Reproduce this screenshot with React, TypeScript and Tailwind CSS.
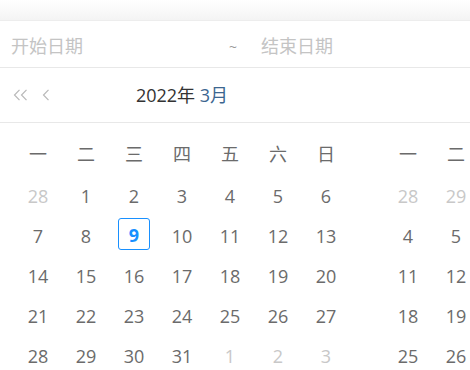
const weekdays = ['一', '二', '三', '四', '五', '六', '日'];

type Day = { n: number; muted?: boolean; selected?: boolean };

const march: Day[] = [
  { n: 28, muted: true },
  ...Array.from({ length: 31 }, (_, i) => ({ n: i + 1, selected: i + 1 === 9 })),
  { n: 1, muted: true },
  { n: 2, muted: true },
  { n: 3, muted: true },
];

const april: Day[] = [
  { n: 28, muted: true },
  { n: 29, muted: true },
  { n: 30, muted: true },
  { n: 31, muted: true },
  ...Array.from({ length: 31 }, (_, i) => ({ n: i + 1 })),
];

function Chevron({ className }: { className?: string }) {
  return (
    <svg width="8" height="12" viewBox="0 0 8 12" className={className} fill="none" stroke="#b8b8b8" strokeWidth="1.2">
      <path d="M6.5 0.8 L1.5 6 L6.5 11.2" />
    </svg>
  );
}

function MonthGrid({ days }: { days: Day[] }) {
  return (
    <div className="w-[370px] shrink-0 pl-[14px] pt-[9px]">
      <div className="grid w-[336px] grid-cols-7">
        {weekdays.map((w) => (
          <div key={w} className="flex h-[44px] items-center justify-center text-[18px] text-[#6b6b6b]">
            {w}
          </div>
        ))}
        {days.slice(0, 35).map((d, i) => (
          <div key={i} className="flex h-[40px] items-center justify-center">
            {d.selected ? (
              <span className="flex h-[32px] w-[32px] -translate-y-[2px] items-center justify-center rounded-[3px] border border-[#1890ff] pt-[3px] text-[18px] font-bold text-[#1890ff]">
                {d.n}
              </span>
            ) : (
              <span className={`text-[18px] leading-[24px] ${d.muted ? 'text-[#c8c8c8]' : 'text-[#6b6b6b]'}`}>{d.n}</span>
            )}
          </div>
        ))}
      </div>
    </div>
  );
}

export default function App() {
  return (
    <div
      className="h-[370px] w-[470px] overflow-hidden bg-white"
      style={{ fontFamily: '"Open Sans", "Noto Sans CJK SC", sans-serif' }}
    >
      {/* shadow of the field above */}
      <div className="h-[21px] border-b border-[#ededed] bg-gradient-to-b from-white to-[#f4f4f4]" />

      {/* range inputs */}
      <div className="flex h-[47px] items-center border-b border-[#e8e8e8] pt-[5px] text-[18px] text-[#c4c4c4]">
        <span className="w-[218px] pl-[11px]">开始日期</span>
        <span className="w-[30px] text-center text-[14px] text-[#999]">~</span>
        <span className="pl-[13px]">结束日期</span>
      </div>

      {/* header */}
      <div className="flex h-[55px] items-center border-b border-[#e8e8e8]">
        <div className="grid w-[364px] grid-cols-[60px_1fr_60px] items-center">
          <div className="flex items-center pl-[13px]">
            <Chevron />
            <Chevron className="-ml-[1px]" />
            <Chevron className="ml-[14px]" />
          </div>
          <div className="text-center text-[18px] text-[#333]">
            2022年 <span className="text-[#3c6690]">3月</span>
          </div>
          <div />
        </div>
      </div>

      {/* month panels */}
      <div className="flex">
        <MonthGrid days={march} />
        <MonthGrid days={april} />
      </div>
    </div>
  );
}
